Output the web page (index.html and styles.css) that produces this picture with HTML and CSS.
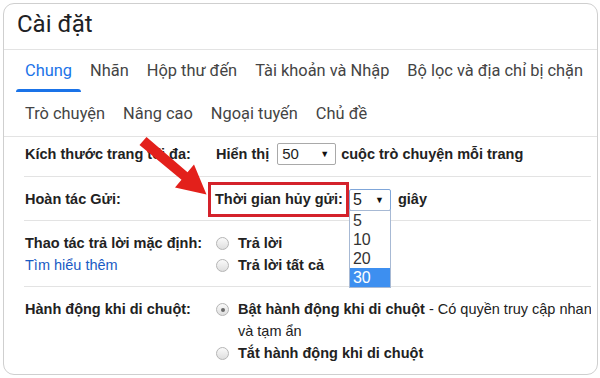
FILE: index.html
```html
<!DOCTYPE html>
<html lang="vi">
<head>
<meta charset="utf-8">
<link rel="stylesheet" href="styles.css">
</head>
<body>
<div class="card">
  <div class="title">Cài đặt</div>
  <div class="tabs tabs-main">
    <span class="tab active">Chung</span>
    <span class="tab">Nhãn</span>
    <span class="tab">Hộp thư đến</span>
    <span class="tab">Tài khoản và Nhập</span>
    <span class="tab">Bộ lọc và địa chỉ bị chặn</span>
  </div>
  <div class="tabs tabs-sub">
    <span class="tab">Trò chuyện</span>
    <span class="tab">Nâng cao</span>
    <span class="tab">Ngoại tuyến</span>
    <span class="tab">Chủ đề</span>
  </div>
  <div class="rows">
    <div class="row r1">
      <div class="label">Kích thước trang tối đa:</div>
      <div class="value">
        <span>Hiển thị</span>
        <span class="select sel50"><span class="sel-text">50</span><span class="caret">▼</span></span>
        <span>cuộc trò chuyện mỗi trang</span>
      </div>
    </div>
    <div class="row r2">
      <div class="label">Hoàn tác Gửi:</div>
      <div class="value">
        <span class="redbox">Thời gian hủy gửi:</span>
        <span class="select sel5"><span class="sel-text">5</span><span class="caret">▼</span>
          <span class="list">
            <span class="opt">5</span>
            <span class="opt">10</span>
            <span class="opt">20</span>
            <span class="opt hl">30</span>
          </span>
        </span>
        <span class="unit">giây</span>
      </div>
    </div>
    <div class="row r3">
      <div class="label">
        <div>Thao tác trả lời mặc định:</div>
        <div class="link">Tìm hiểu thêm</div>
      </div>
      <div class="value col">
        <div class="opt-line"><span class="radio"></span><b>Trả lời</b></div>
        <div class="opt-line"><span class="radio"></span><b>Trả lời tất cả</b></div>
      </div>
    </div>
    <div class="row r4">
      <div class="label">Hành động khi di chuột:</div>
      <div class="value col">
        <div class="opt-line"><span class="radio checked"></span><div class="opt-body"><div class="nowrap"><b>Bật hành động khi di chuột</b> - Có quyền truy cập nhanh</div><div class="normal">và tạm ẩn</div></div></div>
        <div class="opt-line"><span class="radio"></span><b>Tắt hành động khi di chuột</b></div>
      </div>
    </div>
  </div>
</div>
<svg class="arrow" width="600" height="378" viewBox="0 0 600 378">
  <polygon points="146.5,137 187.5,172.2 194,164.5 206.5,194.5 175,187.5 181.5,179.8 139.5,145" fill="#e3201b"/>
</svg>
</body>
</html>
```
FILE: styles.css
```css
* { box-sizing: border-box; }
html, body { margin: 0; padding: 0; background: #fff; }
body { width: 600px; height: 378px; overflow: hidden; font-family: "Liberation Sans", Arial, sans-serif; color: #222; }

.card {
  margin: 3px 0 0 3px;
  width: 595px;
  height: 372px;
  border: 1px solid #cfcfcf;
  border-radius: 11px;
  overflow: hidden;
  background: #fff;
}

.title {
  height: 46px;
  line-height: 41px;
  padding-left: 13px;
  font-family: Roboto, "Open Sans", sans-serif;
  font-size: 24px;
  color: #202124;
  border-bottom: 1px solid #e3e3e3;
}

.tabs {
  display: flex;
  padding-left: 12px;
  font-family: Roboto, "Open Sans", sans-serif;
  font-size: 16.4px;
  color: #444;
}
.tab { position: relative; padding: 0 9px; white-space: nowrap; }
.tabs-main { height: 42px; line-height: 42px; }
.tabs-sub { height: 45px; line-height: 44px; border-bottom: 1px solid #e3e3e3; }
.tab.active { color: #1a73e8; }
.tab.active::after {
  content: "";
  position: absolute;
  left: 0; right: 0; bottom: 0;
  height: 3px;
  background: #1a73e8;
  border-radius: 3px 3px 0 0;
}

.rows { margin: 0 6px 0 20px; font-size: 14.5px; }
.row { display: flex; border-bottom: 1px solid #e3e3e3; padding-left: 1px; }
.r4 { overflow: hidden; }
.label { width: 191px; flex: none; font-weight: bold; white-space: nowrap; }
.value { display: flex; align-items: center; font-weight: bold; white-space: nowrap; }
.value.col { flex-direction: column; align-items: flex-start; }

.r1 { padding: 6px 0 11px 1px; line-height: 22px; }
.r2 { padding: 5px 0 3px 1px; line-height: 35px; }
.r3 { padding: 11px 0 10px 1px; line-height: 22px; }
.r4 { padding: 11px 0 0 1px; line-height: 22px; border-bottom: none; }

.select {
  position: relative;
  display: inline-flex;
  align-items: center;
  justify-content: space-between;
  font-weight: normal;
  font-size: 15px;
  border: 1px solid #a9a9a9;
  border-radius: 2px;
  background: #fff;
}
.caret { font-size: 9px; color: #111; }
.sel50 { width: 59px; height: 22px; line-height: 20px; padding: 0 6px 0 4px; margin: 0 5px 0 8px; }
.sel5 { width: 42px; height: 22px; line-height: 20px; padding: 0 6px 0 3px; border-color: #7fa6d9; font-size: 16px; }

.list {
  position: absolute;
  left: -1px;
  top: 20px;
  width: 42px;
  background: #fff;
  border: 1px solid #a7b9d4;
  display: flex;
  flex-direction: column;
  z-index: 2;
}
.opt { display: block; height: 19px; line-height: 19px; padding-left: 3px; font-size: 16px; color: #333; }
.opt.hl { background: #3d8ff0; color: #fff; }

.redbox {
  display: inline-block;
  margin-left: -8px;
  height: 35px;
  line-height: 29px;
  border: 3px solid #d4222b;
  padding: 0 3px 0 4px;
}
.unit { margin-left: 7px; }

.link { color: #1a5bc4; font-weight: normal; }

.opt-line { display: flex; align-items: flex-start; }
.radio {
  flex: none;
  width: 13px;
  height: 13px;
  margin: 5px 9px 0 0;
  border: 1px solid #b5b5b5;
  border-radius: 50%;
  background: linear-gradient(#fafafa, #dedede);
  position: relative;
}
.radio.checked::after {
  content: "";
  position: absolute;
  left: 3.5px; top: 3.5px;
  width: 4px; height: 4px;
  border-radius: 50%;
  background: #6a6a6a;
}
.opt-body { display: flex; flex-direction: column; }
.nowrap { white-space: nowrap; font-weight: normal; }
.normal { font-weight: normal; }

.arrow { position: absolute; left: 0; top: 0; pointer-events: none; }
```
